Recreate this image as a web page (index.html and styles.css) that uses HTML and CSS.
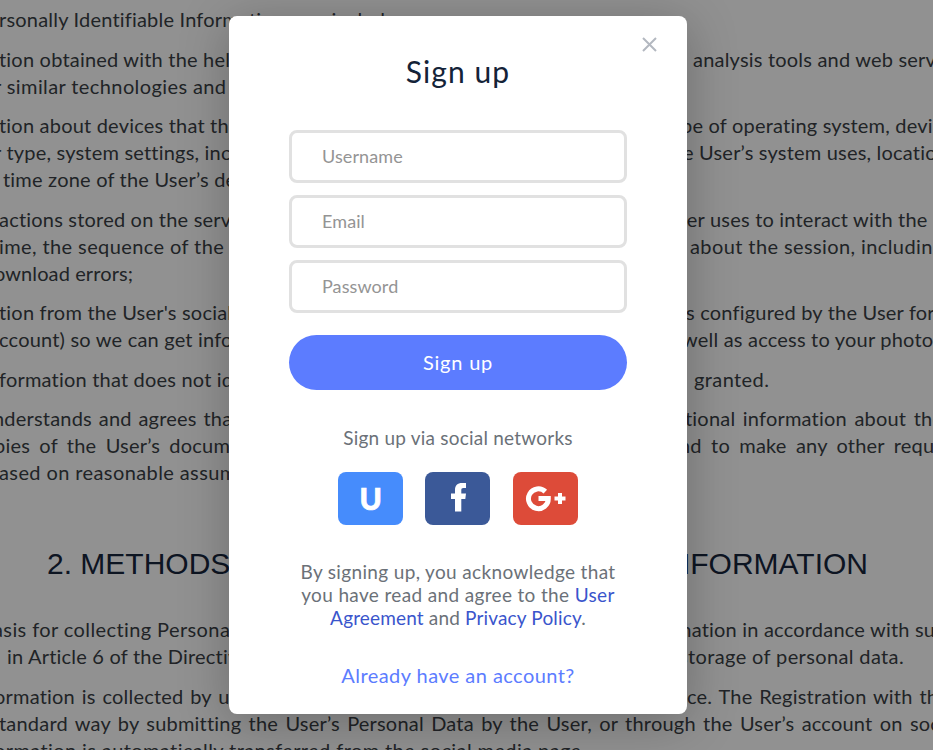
FILE: index.html
```html
<!DOCTYPE html>
<html lang="en">
<head>
<meta charset="utf-8">
<title>Sign up</title>
<link rel="stylesheet" href="styles.css">
</head>
<body>
<main class="doc">
  <div class="para"><div class="line"><span>rsonally Identifiable Information may include:</span></div></div>
  <div class="para">
    <div class="line"><span>tion obtained with the help</span><span class="r r1">analysis tools and web serv</span></div>
    <div class="line"><span class="l2 wide">r similar technologies and</span></div>
  </div>
  <div class="para">
    <div class="line"><span>tion about devices that the</span><span class="r r2">pe of operating system, devi</span></div>
    <div class="line"><span class="l2">r type, system settings, inc</span><span class="r r3">e User’s system uses, locatio</span></div>
    <div class="line"><span class="l3">time zone of the User’s de</span></div>
  </div>
  <div class="para">
    <div class="line"><span>actions stored on the serve</span><span class="r r4">ser uses to interact with the</span></div>
    <div class="line"><span class="wide">ime, the sequence of the</span><span class="r r5 wide">about the session, including</span></div>
    <div class="line"><span class="l4 tight">ownload errors;</span></div>
  </div>
  <div class="para">
    <div class="line"><span>tion from the User's social</span><span class="r r6">s configured by the User for</span></div>
    <div class="line"><span>ccount) so we can get info</span><span class="r r7">well as access to your photo</span></div>
  </div>
  <div class="para"><div class="line"><span>formation that does not id</span><span class="r r8 wide">granted.</span></div></div>
  <div class="para">
    <div class="line w1"><span class="l5">nderstands and agrees tha</span><span class="r r9">tional information about the</span></div>
    <div class="line w2"><span class="l4">pies of the User’s docum</span><span class="r r10">nd to make any other requ</span></div>
    <div class="line"><span class="wide">ased on reasonable assum</span></div>
  </div>
  <h2><span>2. METHODS</span><span>INFORMATION</span></h2>
  <div class="para">
    <div class="line"><span class="l5 wide">asis for collecting Persona</span><span class="r r11">mation in accordance with su</span></div>
    <div class="line"><span class="l6">in Article 6 of the Directiv</span><span class="r r12">storage of personal data.</span></div>
  </div>
  <div class="para">
    <div class="line w1"><span class="l4">ormation is collected by u</span><span class="r r13">ce. The Registration with th</span></div>
    <div class="line w3"><span>tandard way by submitting the User’s Personal Data by the User, or through the User’s account on soc</span></div>
    <div class="line"><span class="l4 wide">ormation is automatically transferred from the social media page.</span></div>
  </div>
</main>
<div class="overlay">
  <section class="modal">
    <button class="close" aria-label="Close"><svg width="15" height="15" viewBox="0 0 15 15"><path d="M1 1 14 14M14 1 1 14" stroke="#b3b8c0" stroke-width="2" fill="none"/></svg></button>
    <h1>Sign up</h1>
    <form>
      <input type="text" placeholder="Username">
      <input type="text" placeholder="Email">
      <input type="text" placeholder="Password">
      <button type="button" class="submit">Sign up</button>
    </form>
    <p class="via">Sign up via social networks</p>
    <div class="social">
      <a class="u">U</a>
      <a class="fb"><svg width="65" height="53" viewBox="0 0 65 53"><path d="M30 39.500V27H26V21.500H30V18C30 13.200 32.500 11 37 11H41V16H38.500C36.800 16 36.300 16.800 36.300 18.300V21.500H41L40.300 27H36.300V39.500Z" fill="#fff"/></svg></a>
      <a class="gp"><svg width="65" height="53" viewBox="0 0 65 53"><path d="M32.300 19.600A9.900 9.900 0 1 0 35.300 26.600H25.500" fill="none" stroke="#fff" stroke-width="5"/><path d="M41.500 26.500H52.500M47 21V32" stroke="#fff" stroke-width="4"/></svg></a>
    </div>
    <p class="terms">By signing up, you acknowledge that<br>you have read and agree to the <a>User</a><br><span class="terms-end"><a>Agreement</a> and <a>Privacy Policy</a>.</span></p>
    <a class="login">Already have an account?</a>
  </section>
</div>
</body>
</html>
```
FILE: styles.css
```css
* { box-sizing: border-box; }
html, body { margin: 0; height: 750px; overflow: hidden; }
body { font-family: Lato, "Liberation Sans", sans-serif; background: #fff; position: relative; }
.doc { padding-top: 6px; height: 750px; overflow: hidden; color: #3a3f45; font-size: 20px; line-height: 27px; letter-spacing: 0.2px; }
.para { margin-bottom: 12.5px; }
.line { display: grid; grid-template-columns: 687px 246px; height: 27px; white-space: nowrap; }
.line span { margin-left: -1px; }
.line .l2 { margin-left: -6px; }
.line .l3 { margin-left: 3px; }
.line .l4 { margin-left: -6px; }
.line .l5 { margin-left: -7px; }
.line .l6 { margin-left: 7px; }
.line .r1 { margin-left: 6px; }
.line .r2 { margin-left: -6px; }
.line .r3 { margin-left: -4px; }
.line .r4 { margin-left: -9px; }
.line .r5 { margin-left: 3px; }
.line .r6 { margin-left: -1px; }
.line .r7 { margin-left: -5px; }
.line .r8 { margin-left: 7px; }
.line .r9 { margin-left: -2px; word-spacing: 2.2px; }
.line .r10 { margin-left: -8px; }
.line .r11 { margin-left: -12px; }
.line .r12 { margin-left: -8px; letter-spacing: .37px; }
.line .r13 { margin-left: 0; }
.wide { letter-spacing: .4px; }
.tight { letter-spacing: .1px; }
.w1 { word-spacing: 1.5px; }
.w2 { word-spacing: 4px; }
.w3 { word-spacing: 2px; }
.doc h2 { margin: 58px 0 32px; height: 40px; padding: 0 65px 0 47px; display: flex; justify-content: space-between; font: 400 30px/40px "Liberation Sans", sans-serif; letter-spacing: 0; color: #17263c; }
.overlay { position: absolute; inset: 0; background: rgba(0,0,0,.43); padding: 16px 0 0 229px; }
.modal { position: relative; width: 458px; height: 698px; padding: 0 60px; background: #fff; border-radius: 8px; box-shadow: 0 8px 50px rgba(0,0,0,.25); text-align: center; color: #6b7178; }
.close { position: absolute; top: 21px; right: 30px; width: 15px; height: 15px; padding: 0; border: 0; background: none; }
.close svg { display: block; }
h1 { margin: 0; padding-top: 35px; line-height: 40px; height: 114px; font-size: 30px; font-weight: 400; color: #142338; letter-spacing: 1.1px; }
form { display: flex; flex-direction: column; gap: 12px; }
input { height: 53px; width: 338px; border: 3px solid #e1e1e1; border-radius: 8px; padding: 0 30px 2px; font: 18px Lato, sans-serif; letter-spacing: .1px; background: #fff; }
input::placeholder { color: #949494; opacity: 1; }
.submit { margin-top: 10px; height: 55px; border: 0; border-radius: 28px; background: #5c7cff; color: #fff; font: 20px Lato, sans-serif; letter-spacing: .8px; padding: 0 0 2px; }
.via { margin: 35px 0 21px; height: 26px; line-height: 26px; font-size: 19px; letter-spacing: .22px; }
.social { display: flex; justify-content: center; gap: 22.4px; }
.social a { width: 65px; height: 53px; border-radius: 8px; color: #fff; }
.social svg { display: block; }
.u { background: #468cfc; font-size: 30px; font-weight: 900; line-height: 52px; -webkit-text-stroke: .7px #fff; }
.social .fb { background: #3b5998; margin: 0 .5px 0 -.5px; }
.gp { background: #dd4b39; }
.terms { margin: 35px -10px 0; font-size: 19px; line-height: 23px; white-space: nowrap; letter-spacing: .35px; }
.terms-end { letter-spacing: .16px; }
.terms a { color: #3a55cc; }
.login { display: block; margin-top: 33px; font-size: 20px; line-height: 27px; color: #5c7cff; letter-spacing: .44px; }
```
